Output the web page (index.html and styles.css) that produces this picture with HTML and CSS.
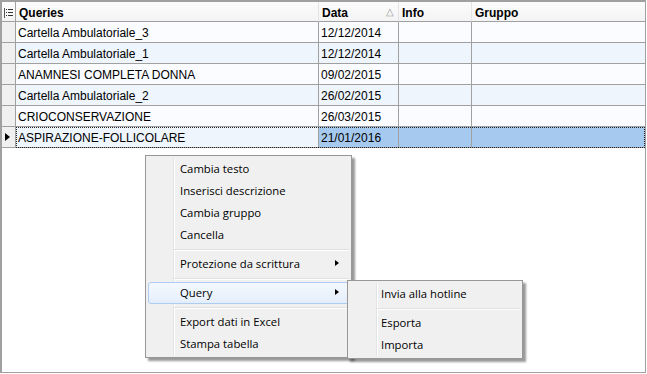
FILE: index.html
```html
<!DOCTYPE html>
<html lang="it">
<head>
    <meta charset="UTF-8">
    <title>Queries</title>
    <link rel="stylesheet" href="styles.css">
</head>
<body>
    <div class="frame">
        <div class="grid">
            <div class="row head">
                <div class="ind">
                    <svg width="9" height="10" viewBox="0 0 9 10">
                        <rect x="0" y="0" width="1" height="10" fill="#555"/>
                        <rect x="2" y="1" width="1" height="1" fill="#333"/>
                        <rect x="4" y="1" width="5" height="1" fill="#333"/>
                        <rect x="2" y="4" width="1" height="1" fill="#333"/>
                        <rect x="4" y="4" width="5" height="1" fill="#333"/>
                        <rect x="2" y="7" width="1" height="1" fill="#333"/>
                        <rect x="4" y="7" width="5" height="1" fill="#333"/>
                    </svg>
                </div>
                <div class="cell">Queries</div>
                <div class="cell sort">Data<span class="arrow">&#9651;</span></div>
                <div class="cell">Info</div>
                <div class="cell">Gruppo</div>
            </div>
            <div class="row">
                <div class="ind"></div>
                <div class="cell">Cartella Ambulatoriale_3</div>
                <div class="cell">12/12/2014</div>
                <div class="cell"></div>
                <div class="cell"></div>
            </div>
            <div class="row alt">
                <div class="ind"></div>
                <div class="cell">Cartella Ambulatoriale_1</div>
                <div class="cell">12/12/2014</div>
                <div class="cell"></div>
                <div class="cell"></div>
            </div>
            <div class="row">
                <div class="ind"></div>
                <div class="cell">ANAMNESI COMPLETA DONNA</div>
                <div class="cell">09/02/2015</div>
                <div class="cell"></div>
                <div class="cell"></div>
            </div>
            <div class="row alt">
                <div class="ind"></div>
                <div class="cell">Cartella Ambulatoriale_2</div>
                <div class="cell">26/02/2015</div>
                <div class="cell"></div>
                <div class="cell"></div>
            </div>
            <div class="row">
                <div class="ind"></div>
                <div class="cell">CRIOCONSERVAZIONE</div>
                <div class="cell">26/03/2015</div>
                <div class="cell"></div>
                <div class="cell"></div>
            </div>
            <div class="row alt sel">
                <div class="ind"><span class="pointer"></span></div>
                <div class="cell">ASPIRAZIONE-FOLLICOLARE</div>
                <div class="cell picked">21/01/2016</div>
                <div class="cell picked"></div>
                <div class="cell picked"></div>
            </div>
        </div>

        <div class="menu main-menu">
            <div class="item">Cambia testo</div>
            <div class="item">Inserisci descrizione</div>
            <div class="item">Cambia gruppo</div>
            <div class="item">Cancella</div>
            <div class="sep"></div>
            <div class="item more">Protezione da scrittura</div>
            <div class="sep"></div>
            <div class="item more hover">Query</div>
            <div class="sep"></div>
            <div class="item">Export dati in Excel</div>
            <div class="item">Stampa tabella</div>
        </div>

        <div class="menu sub-menu">
            <div class="item">Invia alla hotline</div>
            <div class="sep"></div>
            <div class="item">Esporta</div>
            <div class="item">Importa</div>
        </div>
    </div>
</body>
</html>
```

FILE: styles.css
```css
body {
    margin: 0;
    background: #fff;
}
.frame {
    position: relative;
    width: 646px;
    height: 373px;
    box-sizing: border-box;
    border: 2px solid #a0a0a0;
    border-right-width: 1px;
    border-bottom-width: 1px;
    background: #fff;
    font-family: "Liberation Sans", Arial, sans-serif;
    font-size: 12px;
    color: #000;
}
.row {
    position: relative;
    display: grid;
    grid-template-columns: 14px 303px 80px 73px 1fr;
    height: 21px;
    background: #fafcff;
}
.row.alt {
    background: #eef5fd;
}
.row > div {
    box-sizing: border-box;
    border-right: 1px solid #a0a0a0;
    border-bottom: 1px solid #a0a0a0;
    line-height: 20px;
    padding-top: 1px;
    white-space: nowrap;
    overflow: hidden;
}
.row > div:last-child {
    border-right: none;
}
.cell {
    padding-left: 2px;
}
.ind {
    background: #f0f0f0;
    position: relative;
}
.head {
    height: 20px;
    background: linear-gradient(#fcfcfc, #f3f3f3);
}
.head > div {
    border-right-color: #e4e4e4;
    font-weight: bold;
    line-height: 19px;
    padding-top: 2px;
}
.head .cell {
    padding-left: 3px;
}
.head .ind {
    background: transparent;
    border-right-color: #a0a0a0;
    display: flex;
    align-items: center;
    justify-content: center;
}
.sort {
    position: relative;
}
.arrow {
    position: absolute;
    right: 4px;
    top: 0;
    font-weight: normal;
    font-size: 10px;
    color: #9a9a9a;
}
.picked {
    background: #a6c9ef;
}
.sel::after {
    content: "";
    position: absolute;
    left: 14px;
    top: 0;
    right: 0;
    bottom: 0;
    border: 1px dotted #222;
    pointer-events: none;
}
.pointer {
    position: absolute;
    left: 3px;
    top: 6px;
    border-left: 5px solid #000;
    border-top: 4px solid transparent;
    border-bottom: 4px solid transparent;
}

/* menu contestuale */
.menu {
    position: absolute;
    box-sizing: border-box;
    background: #f0f0f0;
    border: 1px solid #979797;
    padding: 2px 0;
    box-shadow: 3px 3px 2px rgba(0, 0, 0, 0.4);
    font-family: "Open Sans", "Noto Sans", sans-serif;
    font-size: 11.3px;
    color: #000;
}
.menu::before {
    content: "";
    position: absolute;
    top: 2px;
    bottom: 2px;
    width: 1px;
    background: #e2e3e3;
    border-right: 1px solid #fff;
}
.main-menu {
    left: 143px;
    top: 153px;
    width: 207px;
}
.main-menu::before {
    left: 27px;
}
.sub-menu {
    left: 345px;
    top: 278px;
    width: 176px;
}
.sub-menu::before {
    left: 28px;
}
.item {
    position: relative;
    height: 22px;
    line-height: 19px;
    margin: 0 2px;
    padding-left: 31px;
    border: 1px solid transparent;
    border-radius: 3px;
    box-sizing: border-box;
}
.sub-menu .item {
    padding-left: 30px;
}
.item.hover {
    border-color: #aeccf1;
    background: linear-gradient(#f4f8fd, #e4eefb);
}
.more::after {
    content: "";
    position: absolute;
    right: 9px;
    top: 6px;
    border-left: 4px solid #000;
    border-top: 3.5px solid transparent;
    border-bottom: 3.5px solid transparent;
}
.sep {
    height: 7px;
    margin-left: 28px;
    margin-right: 2px;
    position: relative;
}
.sub-menu .sep {
    margin-left: 29px;
}
.sep::after {
    content: "";
    position: absolute;
    left: 0;
    right: 0;
    top: 3px;
    height: 1px;
    background: #e0e0e0;
    border-bottom: 1px solid #fff;
}
```
